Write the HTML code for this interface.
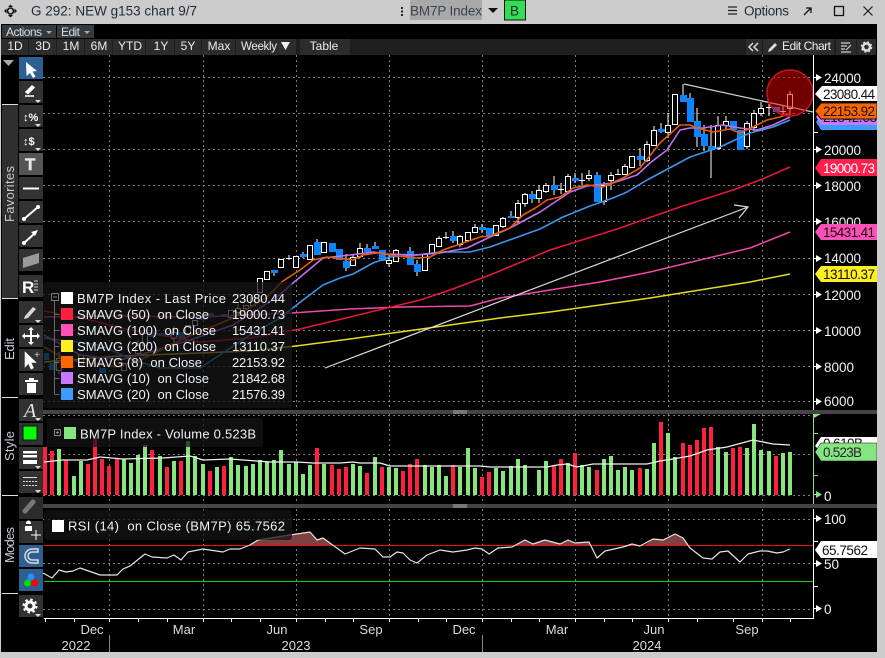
<!DOCTYPE html>
<html><head><meta charset="utf-8"><title>G 292: NEW g153 chart 9/7</title>
<style>
html,body{margin:0;padding:0;background:#ccc;width:885px;height:658px;overflow:hidden}
svg{display:block;position:absolute;left:0;top:0}
text{font-family:"Liberation Sans",sans-serif;font-size:13px;fill:#eef2f6}
.t{font-size:13.5px;fill:#1e2a38}
.b{font-size:12px;fill:#e8ecf0;text-anchor:middle}
.a{font-size:13.5px}
.k{fill:#111;font-size:13.5px}
.v{font-size:13px;fill:#d8dde2;text-anchor:middle}
.c{shape-rendering:crispEdges}
</style></head><body>
<svg width="885" height="658" viewBox="0 0 885 658" xmlns="http://www.w3.org/2000/svg">
<rect width="885" height="658" fill="#ccc"/>
<rect x="1" y="24" width="876" height="628" fill="#000"/>

<!-- title bar -->
<g fill="#111"><path d="M10.5 4.5l2.5 2.5h-5zM10.5 17.5l2.5-2.5h-5zM4 11l2.5-2.5v5zM17 11l-2.5-2.5v5z"/><circle cx="10.5" cy="11" r="3" fill="none" stroke="#111" stroke-width="1.6"/></g>
<text class="t" x="31" y="15.5" textLength="166">G 292: NEW g153 chart 9/7</text>
<g fill="#222"><rect x="401" y="7" width="2" height="2"/><rect x="401" y="10.5" width="2" height="2"/><rect x="401" y="14" width="2" height="2"/></g>
<rect x="410" y="0" width="72" height="20" fill="#a9a9a9"/>
<text class="t" x="410" y="15.5" textLength="72" style="fill:#3a4550">BM7P Index</text>
<path d="M488 8h10l-5 5z" fill="#111"/>
<rect x="504.5" y="0" width="21" height="20" fill="#33dd55" stroke="#111"/>
<text class="t" x="510" y="15.5">B</text>
<path d="M728 7h9M728 10.5h9M728 14h9" stroke="#222" stroke-width="1.2" fill="none"/>
<text class="t" x="744" y="15.5" textLength="45">Options</text>
<path d="M804 15l7-7M806 8h5v5" stroke="#111" stroke-width="1.3" fill="none"/>
<rect x="834.5" y="6.5" width="9" height="9" fill="none" stroke="#111" stroke-width="1.3"/>
<path d="M863.500 6.500l9 9M872.500 6.500l-9 9" stroke="#111" stroke-width="1.1"/>

<!-- toolbars -->
<g class="c">
<rect x="2" y="25" width="54" height="13" fill="#343a3e"/>
<rect x="57" y="25" width="37" height="13" fill="#343a3e"/>
<rect x="1" y="39" width="875" height="16" fill="#1f1e1b"/>
<g fill="#2c2c2c">
<rect x="1" y="39" width="27" height="16"/><rect x="29" y="39" width="27" height="16"/><rect x="57" y="39" width="27" height="16"/><rect x="85" y="39" width="27" height="16"/><rect x="113" y="39" width="32" height="16"/><rect x="146" y="39" width="28" height="16"/><rect x="175" y="39" width="26" height="16"/><rect x="202" y="39" width="33" height="16"/><rect x="236" y="39" width="60" height="16"/><rect x="300" y="39" width="50" height="16"/>
<rect x="746" y="39" width="16" height="16"/><rect x="763" y="39" width="71" height="16"/><rect x="836" y="39" width="20" height="16"/><rect x="857" y="39" width="19" height="16"/>
</g></g>
<text x="6" y="36" style="font-size:12px;fill:#d8dce0" textLength="36">Actions</text>
<path d="M46 31h6l-3 3z" fill="#aaa"/>
<text x="61" y="36" style="font-size:12px;fill:#d8dce0" textLength="19">Edit</text>
<path d="M84 31h6l-3 3z" fill="#aaa"/>
<text class="b" x="15" y="50">1D</text><text class="b" x="43" y="50">3D</text><text class="b" x="71" y="50">1M</text><text class="b" x="99" y="50">6M</text><text class="b" x="130" y="50">YTD</text><text class="b" x="161" y="50">1Y</text><text class="b" x="188" y="50">5Y</text><text class="b" x="219" y="50">Max</text>
<text x="241" y="50" style="font-size:11.5px;fill:#e8ecf0" textLength="36">Weekly</text>
<path d="M281 42h9l-4.500 8z" fill="#eee"/>
<text class="b" x="324" y="50">Table</text>
<path d="M753 43l-4 4 4 4M758 43l-4 4 4 4" stroke="#ddd" stroke-width="1.500" fill="none"/>
<path d="M768 52l1-3 6-6 2 2-6 6z" fill="#ddd"/>
<text x="782" y="50" style="font-size:12px;fill:#e8ecf0" textLength="49">Edit Chart</text>
<path d="M841 43h9M841 46h6M841 49h4M841 52h10M846 50l5-5" stroke="#ccc" stroke-width="1.200" fill="none"/>
<circle cx="866.500" cy="47" r="3.500" fill="none" stroke="#ddd" stroke-width="2.500"/>
<circle cx="866.500" cy="47" r="5" fill="none" stroke="#ddd" stroke-width="1.500" stroke-dasharray="2 2"/>

<!-- left gutter -->
<path d="M3 60h11l-5.500 6z" fill="#aaa"/>
<rect x="2" y="105" width="16" height="193" fill="#2f2f2f"/>
<path d="M2 104.500h16M2 298.500h16M2 397.500h16M2 495.500h16M2 593.500h16" stroke="#ddd" class="c"/>
<text transform="translate(14,222) rotate(-90)" textLength="56" style="font-size:13px;fill:#c6ccd2">Favorites</text>
<text transform="translate(14,360) rotate(-90)" textLength="22" style="font-size:13px;fill:#c6ccd2">Edit</text>
<text transform="translate(14,461) rotate(-90)" textLength="30" style="font-size:13px;fill:#c6ccd2">Style</text>
<text transform="translate(14,563) rotate(-90)" textLength="36" style="font-size:13px;fill:#c6ccd2">Modes</text>

<!-- tool buttons -->
<g class="c" fill="#323232">
<rect x="19" y="57" width="24" height="22" fill="#2d5f90"/>
<rect x="19" y="81" width="24" height="22"/><rect x="19" y="105" width="24" height="22"/><rect x="19" y="129" width="24" height="22"/>
<rect x="19" y="153" width="24" height="22" fill="#555"/>
<rect x="19" y="177" width="24" height="22"/><rect x="19" y="201" width="24" height="22"/><rect x="19" y="225" width="24" height="22"/><rect x="19" y="249" width="24" height="22"/><rect x="19" y="275" width="24" height="22"/>
<rect x="19" y="301" width="24" height="22"/><rect x="19" y="325" width="24" height="22"/><rect x="19" y="349" width="24" height="22"/><rect x="19" y="373" width="24" height="22"/>
<rect x="19" y="399" width="24" height="22"/><rect x="19" y="423" width="24" height="22"/><rect x="19" y="447" width="24" height="22"/><rect x="19" y="471" width="24" height="22"/>
<rect x="19" y="497" width="24" height="22" fill="#2c2c2c"/><rect x="19" y="521" width="24" height="22"/>
<rect x="19" y="545" width="24" height="22" fill="#2d5f90"/><rect x="19" y="569" width="24" height="22" fill="#2d5f90"/>
<rect x="19" y="595" width="24" height="22"/>
</g>
<path d="M26 62l11 9-4.500.5 3 5-2.500 1.500-3-5-3.500 3z" fill="#fff"/>
<path d="M26 92l6-6 2 1.500-6 6zM25 96h9" stroke="#fff" stroke-width="1.500" fill="#fff"/>
<path d="M35 100h6l-3 3zM35 124h6l-3 3zM35 148h6l-3 3zM35 320h6l-3 3zM35 418h6l-3 3zM35 466h6l-3 3zM35 490h6l-3 3zM35 614h6l-3 3z" fill="#ddd"/>
<text x="23" y="121" style="font-size:11px;font-weight:bold;fill:#fff">↕%</text>
<text x="23" y="145" style="font-size:11px;font-weight:bold;fill:#fff">↕$</text>
<text x="25" y="170" style="font-size:17px;font-weight:bold;fill:#dfe6f2;stroke:#dfe6f2;stroke-width:.5">T</text>
<path d="M23 188.500h16" stroke="#fff" stroke-width="2"/>
<path d="M24 219l14-12" stroke="#fff" stroke-width="2"/><circle cx="24" cy="219" r="2" fill="#fff"/><circle cx="38" cy="207" r="2" fill="#fff"/>
<path d="M24 243l10-9" stroke="#fff" stroke-width="2"/><path d="M38 230l-7 2 4 4z" fill="#fff"/><circle cx="24" cy="243" r="2" fill="#fff"/>
<path d="M23 258l16-5v10l-16 5z" fill="#9a9a9a"/>
<text x="22" y="293" style="font-size:17px;font-weight:bold;fill:#fff">R</text>
<path d="M34 281h4M34 284h4M34 287h4M34 290h4" stroke="#ccc"/>
<path d="M25 316l8-9 3 2-8 9-4 1z" fill="#d8d8d8"/>
<path d="M31 327l3 3h-2v5h5v-2l3 3-3 3v-2h-5v5h2l-3 3-3-3h2v-5h-5v2l-3-3 3-3v2h5v-5h-2z" fill="#fff"/>
<path d="M25 352v15l3.500-3.500 2.500 5.500 2.500-1-2.500-5.500h5zM37 352v5M34.500 354.500h5" fill="#fff" stroke="#fff" stroke-width=".6"/>
<path d="M25 380h13v2h-13zM27 383h9v10h-9zM29 378h5v2h-5z" fill="#fff"/>
<text x="24" y="417" style="font-family:'Liberation Serif',serif;font-size:20px;font-style:italic;fill:#e8e8e8">A</text>
<rect x="23" y="426" width="14" height="14" fill="#00ff00" stroke="#111"/>
<rect x="23" y="451" width="14" height="2.500" fill="#fff"/><rect x="23" y="455" width="14" height="2.500" fill="#fff"/><rect x="23" y="460" width="14" height="4" fill="#fff"/>
<path d="M23 477.500h14" stroke="#ddd"/><path d="M23 481.500h14M23 485.500h14" stroke="#ddd" stroke-dasharray="2 1"/>
<path d="M25 511l8-9" stroke="#777" stroke-width="5" stroke-linecap="round" stroke-dasharray="1.500 1.500" fill="none"/>
<path d="M26 524h5v-1a2.500 2.500 0 0 0-5 0zM25 526h7v5h-7z" fill="#fff"/>
<path d="M31 535h10M36 530v10" stroke="#fff"/>
<path d="M38 549h-6a7 7 0 0 0 0 14h6v-3h-6a4 4 0 0 1 0-8h6z" fill="none" stroke="#ddd" stroke-width="1.500"/>
<circle cx="31" cy="577" r="3.500" fill="#2a8cff"/><circle cx="27.500" cy="583" r="3.500" fill="#00dd00"/><circle cx="34.500" cy="583" r="3.500" fill="#ff0000"/>
<circle cx="30" cy="606" r="4" fill="none" stroke="#fff" stroke-width="3"/>
<circle cx="30" cy="606" r="6.500" fill="none" stroke="#fff" stroke-width="2" stroke-dasharray="2.500 2.600"/>

<!-- grid -->
<g class="c" stroke="#7c7c7c" fill="none" stroke-dasharray="2 3">
<path d="M109.500 55V409M203.500 55V409M296.500 55V409M389.500 55V409M482.500 55V409M575.500 55V409M668.500 55V409M762.500 55V409"/>
<path d="M109.500 414V503M203.500 414V503M296.500 414V503M389.500 414V503M482.500 414V503M575.500 414V503M668.500 414V503M762.500 414V503"/>
<path d="M109.500 509V618M203.500 509V618M296.500 509V618M389.500 509V618M482.500 509V618M575.500 509V618M668.500 509V618M762.500 509V618"/>
<path d="M43 77.500H813M43 113.500H813M43 149.500H813M43 185.500H813M43 221.500H813M43 258.500H813M43 294.500H813M43 330.500H813M43 366.500H813M43 401.500H813"/>
<path d="M43 415.500H813M43 454.500H813M43 495.500H813"/>
<path d="M43 519.500H813M43 563.500H813M43 609.500H813"/>
</g>

<!-- candles: wicks & hollow bodies -->
<g class="c" stroke="#fff" fill="#000" stroke-width="1.200">
<path fill="none" d="M353 254V266M360 243V258M389 255V267M396 249V262M425 253V271M439 236V247M460 235V247M475 224V233M503 217V228M518 200V223M525 193V207M539 185V203M546 183V193M568 174V192M589 170V181M604 182V205M611 172V190M625 164V175M647 141V162M654 126V146M668 113V138M718 116V150M726 116V130M747 121V149M754 110V131M761 102V116M790 91V115M289 255V260M446 232V239M561 183V194M582 173V185M618 169V174M769 102V116M783 105V115M274 270V276M303 252V258M317 239V255M346 254V271M367 244V255M375 242V249M410 247V265M417 260V276M453 231V243M482 224V233M511 211V218M532 191V203M554 176V195M575 173V183M597 172V202M640 148V166M661 123V133M683 84V102M690 93V122M697 108V147M704 125V151M711 125V178M59 352V374M138 340V356M174 326V342M238 304V314"/>
<path fill="none" d="M286 258.500h6M443 237.500h6M558 189.500h6M579 180.500h6M615 174.500h6M766 107.500h6M780 111.500h6"/>
<path d="M257.500 278.500h5v14h-5zM264.500 271.500h5v8h-5zM278.500 259.500h5v8h-5zM293.500 256.500h5v11h-5zM307.500 245.500h5v14h-5zM321.500 242.500h5v10h-5zM350.500 257.500h5v8h-5zM357.500 248.500h5v8h-5zM386.500 260.500h5v3h-5zM393.500 250.500h5v11h-5zM422.500 254.500h5v16h-5zM429.500 244.500h5v9h-5zM436.500 238.500h5v8h-5zM457.500 236.500h5v8h-5zM465.500 232.500h5v8h-5zM472.500 227.500h5v5h-5zM493.500 225.500h5v10h-5zM500.500 218.500h5v8h-5zM515.500 203.500h5v14h-5zM522.500 194.500h5v9h-5zM536.500 190.500h5v8h-5zM543.500 185.500h5v6h-5zM565.500 176.500h5v15h-5zM586.500 175.500h5v3h-5zM601.500 185.500h5v16h-5zM608.500 175.500h5v5h-5zM622.500 166.500h5v8h-5zM629.500 156.500h5v11h-5zM644.500 144.500h5v16h-5zM651.500 130.500h5v15h-5zM665.500 125.500h5v7h-5zM672.500 94.500h5v30h-5zM715.500 125.500h5v23h-5zM723.500 121.500h5v4h-5zM744.500 123.500h5v23h-5zM751.500 113.500h5v14h-5zM758.500 108.500h5v5h-5zM787.500 94.500h5v14h-5z"/>
<path d="M250.500 297.500h5v8h-5zM243.500 305.500h5v3h-5zM235.500 308.500h5v4h-5zM228.500 310.500h5v7h-5zM192.500 320.500h5v5h-5zM185.500 325.500h5v8h-5zM171.500 332.500h5v6h-5zM142.500 333.500h5v12h-5zM135.500 345.500h5v8h-5zM121.500 363.500h5v7h-5zM78.500 355.500h5v10h-5zM56.500 358.500h5v12h-5z"/>
</g>
<path class="c" fill="#0a84ff" d="M271 270h7v3h-7zM300 254h7v3h-7zM314 242h7v13h-7zM329 243h7v9h-7zM336 249h7v11h-7zM343 261h7v7h-7zM364 248h7v4h-7zM372 246h7v3h-7zM379 250h7v11h-7zM407 251h7v14h-7zM414 264h7v8h-7zM450 236h7v5h-7zM479 227h7v3h-7zM486 228h7v9h-7zM508 216h7v2h-7zM529 194h7v5h-7zM551 185h7v5h-7zM572 178h7v3h-7zM594 175h7v27h-7zM637 156h7v4h-7zM658 129h7v3h-7zM680 95h7v7h-7zM687 98h7v24h-7zM694 121h7v16h-7zM701 134h7v12h-7zM708 146h7v3h-7zM730 121h7v9h-7zM737 130h7v20h-7zM773 107h7v5h-7zM200 316h7v4h-7zM207 313h7v4h-7zM221 314h7v3h-7zM178 332h7v6h-7zM164 333h7v3h-7zM157 333h7v3h-7zM149 332h7v5h-7zM99 368h7v5h-7zM49 363h7v7h-7zM44 353h5v7h-5z"/>

<!-- moving averages -->
<g fill="none" stroke-linejoin="round">
<polyline stroke="#e4dc20" stroke-width="1.500" points="44,362 120,356 200,353 250,351 296,346 350,339 400,332 450,325 500,318 550,312 600,305 650,298 700,290 750,282 790,274"/>
<polyline stroke="#f048a8" stroke-width="1.500" points="44,317 120,316 200,317 292,313 350,309 400,307 470,306 500,298 550,290 600,282 650,272 700,260 750,248 790,232"/>
<polyline stroke="#e81838" stroke-width="1.500" points="44,311 90,320 130,330 200,342 250,338 300,329 350,317 420,300 450,290 490,275 550,250 617,229 680,207 733,190 760,180 790,167"/>
<polyline stroke="#3d94e8" stroke-width="1.600" points="44,338 100,345 133,360 160,368 200,368 250,335 280,318 303,300 323,285 340,278 353,274 373,263 390,257 417,255 440,252 470,252 490,247 540,229 563,217 590,206 613,198 627,192 647,180 662,172 690,157 720,147 750,133 773,127 790,120"/>
<polyline stroke="#c070f0" stroke-width="1.600" points="44,335 80,355 120,360 150,352 190,340 233,325 277,297 293,283 323,258 350,255 373,252 387,254 417,255 440,253 467,248 490,237 510,228 540,212 570,192 587,186 613,183 637,175 650,163 667,150 680,130 690,128 703,128 723,125 740,128 757,130 773,125 790,117"/>
<polyline stroke="#e85c08" stroke-width="1.600" points="44,347 67,360 117,367 140,360 187,337 233,318 267,297 283,281 300,270 313,260 327,257 353,260 363,255 377,253 397,256 417,258 430,257 443,250 463,243 480,237 490,236 510,228 523,215 537,207 547,200 560,197 573,188 587,185 603,187 623,178 640,168 660,143 680,125 690,125 697,128 713,132 730,129 740,133 753,127 767,120 780,117 790,113"/>
</g>

<!-- trend and arrow -->
<path d="M684 84L813 112" stroke="#cfcfcf" stroke-width="1.300" fill="none"/>
<path d="M325 368L748 207M734 205L748 207L739 218" stroke="#dcdcdc" stroke-width="1.200" fill="none"/>
<circle cx="790" cy="93" r="23" fill="#e00000" fill-opacity=".5" stroke="#cc1020" stroke-width="1.500"/>

<!-- legend main -->
<rect x="43" y="282" width="249" height="126" rx="3" fill="#141414" fill-opacity=".74"/>
<rect x="51.500" y="293.500" width="7" height="7" fill="none" stroke="#777"/><path d="M53 297h4" stroke="#777"/>
<path d="M54.500 301V394.500M54.500 314.500h5M54.500 330.500h5M54.500 346.500h5M54.500 362.500h5M54.500 378.500h5M54.500 394.500h5" stroke="#666" fill="none" class="c"/>
<g class="c">
<rect x="61" y="292" width="12" height="12" fill="#fff"/>
<rect x="61" y="308" width="12" height="12" fill="#ff2040"/>
<rect x="61" y="324" width="12" height="12" fill="#ff50b8"/>
<rect x="61" y="340" width="12" height="12" fill="#ffee22"/>
<rect x="61" y="356" width="12" height="12" fill="#ff6600"/>
<rect x="61" y="372" width="12" height="12" fill="#c878ff"/>
<rect x="61" y="388" width="12" height="12" fill="#3d9bff"/>
</g>
<text x="77" y="303" textLength="149">BM7P Index - Last Price</text><text x="232" y="303" textLength="53">23080.44</text>
<text x="77" y="319" textLength="132">SMAVG (50) &#160;on Close</text><text x="232" y="319" textLength="53">19000.73</text>
<text x="77" y="335" textLength="139">SMAVG (100) &#160;on Close</text><text x="232" y="335" textLength="53">15431.41</text>
<text x="77" y="351" textLength="139">SMAVG (200) &#160;on Close</text><text x="232" y="351" textLength="53">13110.37</text>
<text x="77" y="367" textLength="125">EMAVG (8) &#160;on Close</text><text x="232" y="367" textLength="53">22153.92</text>
<text x="77" y="383" textLength="132">SMAVG (10) &#160;on Close</text><text x="232" y="383" textLength="53">21842.68</text>
<text x="77" y="399" textLength="132">SMAVG (20) &#160;on Close</text><text x="232" y="399" textLength="53">21576.39</text>

<!-- volume bars -->
<g class="c" fill="none" stroke-width="4">
<path stroke="#ff2040" d="M45 495V447M52 495V451M66 495V460M88 495V464M95 495V437M102 495V459M109 495V466M117 495V459M152 495V450M167 495V467M181 495V461M210 495V471M224 495V466M317 495V448M332 495V465M339 495V469M346 495V467M367 495V473M382 495V467M403 495V471M410 495V464M417 495V459M453 495V465M482 495V477M489 495V472M554 495V465M561 495V459M575 495V453M597 495V470M640 495V468M661 495V422M683 495V443M690 495V445M697 495V440M704 495V428M711 495V427M733 495V448M740 495V447M776 495V456"/>
<path stroke="#86e57f" d="M59 495V449M74 495V476M81 495V461M124 495V459M131 495V463M138 495V455M145 495V445M160 495V456M174 495V461M188 495V441M195 495V456M203 495V464M217 495V467M231 495V457M238 495V465M246 495V466M253 495V464M260 495V460M267 495V462M274 495V460M281 495V450M289 495V464M296 495V462M303 495V474M310 495V465M324 495V464M353 495V464M360 495V466M375 495V457M389 495V467M396 495V468M425 495V465M432 495V467M439 495V465M446 495V476M460 495V467M468 495V448M475 495V468M496 495V468M503 495V471M511 495V466M518 495V459M525 495V465M539 495V470M546 495V461M568 495V463M582 495V465M589 495V467M604 495V459M611 495V456M618 495V470M625 495V467M632 495V470M647 495V469M654 495V443M668 495V433M675 495V457M718 495V447M726 495V452M747 495V448M754 495V424M761 495V450M769 495V451M783 495V453M790 495V452"/>
</g>
<polyline fill="none" stroke="#f0f0f0" stroke-width="1.300" points="44,462 63,460 87,460 100,457 123,459 163,458 190,456 203,460 230,459 270,462 297,462 313,463 340,463 353,462 360,463 380,463 390,466 430,466 480,466 490,467 547,467 557,465 567,464 577,467 593,464 647,464 660,461 673,459 690,456 707,450 727,447 753,440 773,444 790,445"/>
<rect x="47" y="418" width="216" height="29" rx="3" fill="#141414" fill-opacity=".74"/>
<rect x="54.500" y="429.500" width="6" height="6" fill="none" stroke="#888"/><path d="M56 432.500h3M57.500 431v3" stroke="#888"/>
<rect x="64" y="427" width="12" height="12" fill="#86e57f" class="c"/>
<text x="80" y="438.500" textLength="176">BM7P Index - Volume 0.523B</text>

<!-- RSI -->
<rect class="c" x="44" y="545" width="769" height="1" fill="#f01010"/>
<rect class="c" x="44" y="581" width="769" height="1" fill="#18d018"/>
<g fill="#7e4040"><polygon points="250,545 258,540 290,535 310,532 317,540 323,538 333,545"/><polygon points="515,545 525,540 533,544 545,540 560,544 568,540 575,543 589,542 590,545"/><polygon points="645,545 653,539 663,540 675,534 683,538 688,545"/></g>
<polyline fill="none" stroke="#e4e4e4" stroke-width="1.200" stroke-linejoin="round" points="43,573 52,578 59,570 66,572 73,571 80,568 100,575 117,575 123,569 130,566 145,554 152,557 167,558 174,555 181,560 188,552 203,549 223,552 230,549 240,549 250,545 258,540 290,535 310,532 317,540 323,538 345,554 360,548 375,549 383,557 390,557 397,552 403,553 410,560 417,563 427,555 440,550 453,552 467,550 475,548 482,549 489,554 498,548 512,547 525,540 533,544 545,540 560,544 568,540 575,543 589,542 597,558 605,551 623,547 632,544 640,546 653,539 663,540 675,534 683,538 690,548 703,558 712,559 720,552 728,551 740,562 748,554 760,551 767,551 777,553 783,552 790,549"/>
<rect x="44" y="510" width="248" height="30" rx="3" fill="#141414" fill-opacity=".74"/>
<rect x="52" y="520" width="12" height="12" fill="#fff" class="c"/>
<text x="68" y="530.500" textLength="217">RSI (14) &#160;on Close (BM7P) 65.7562</text>

<!-- separators -->
<g class="c"><rect x="43" y="410" width="834" height="4" fill="#444"/><rect x="43" y="504" width="834" height="4" fill="#444"/>
<path d="M453 411h14M453 413h14M453 505h14M453 507h14" stroke="#aaa"/></g>

<!-- axes -->
<g class="c" fill="none">
<path d="M813.500 55V410M813.500 509V619M44 618.500H814" stroke="#fff"/>
<path d="M813.500 414V504" stroke="#86e57f"/>
<path d="M45.500 619v3M74.500 619v3M109.500 619v3M138.500 619v3M167.500 619v3M203.500 619v3M231.500 619v3M260.500 619v3M296.500 619v3M325.500 619v3M353.500 619v3M389.500 619v3M418.500 619v3M446.500 619v3M482.500 619v3M511.500 619v3M539.500 619v3M575.500 619v3M604.500 619v3M632.500 619v3M668.500 619v3M697.500 619v3M733.500 619v3M762.500 619v3M790.500 619v3" stroke="#fff"/>
<path d="M814 132.500h4M814 541.500h4M814 586.500h4" stroke="#fff"/>
<path d="M814 433.500h4M814 475.500h4" stroke="#86e57f"/>
</g>
<path d="M109.500 635V652" stroke="#888" class="c"/><path d="M482.500 635V652" stroke="#888" class="c"/>
<g fill="#fff"><path d="M814 77h2v-3l6 3.500-6 3.500v-3h-2zM814 149h2v-3l6 3.500-6 3.500v-3h-2zM814 185h2v-3l6 3.500-6 3.500v-3h-2zM814 221h2v-3l6 3.500-6 3.500v-3h-2zM814 258h2v-3l6 3.500-6 3.500v-3h-2zM814 294h2v-3l6 3.500-6 3.500v-3h-2zM814 330h2v-3l6 3.500-6 3.500v-3h-2zM814 366h2v-3l6 3.500-6 3.500v-3h-2zM814 401h2v-3l6 3.500-6 3.500v-3h-2zM814 518h2v-3l6 3.500-6 3.500v-3h-2zM814 563h2v-3l6 3.500-6 3.500v-3h-2zM814 608h2v-3l6 3.500-6 3.500v-3h-2z"/></g>
<g fill="#86e57f"><path d="M814 414h7l-7 4zM814 494h2v-3l6 3.500-6 3.500v-3h-2z"/></g>

<!-- axis labels -->
<g class="a">
<text class="a" x="824" y="83" textLength="37">24000</text>
<text class="a" x="824" y="155" textLength="37">20000</text>
<text class="a" x="824" y="191" textLength="37">18000</text>
<text class="a" x="824" y="227" textLength="37">16000</text>
<text class="a" x="824" y="263" textLength="37">14000</text>
<text class="a" x="824" y="300" textLength="37">12000</text>
<text class="a" x="824" y="336" textLength="37">10000</text>
<text class="a" x="824" y="372" textLength="30">8000</text>
<text class="a" x="824" y="406" textLength="30">6000</text>
<text class="a" x="824" y="524" textLength="22">100</text>
<text class="a" x="824" y="569" textLength="15">50</text>
<text class="a" x="824" y="614" textLength="8">0</text>
<text class="a" x="824" y="501" textLength="8">0</text>
</g>
<!-- price flags -->
<polygon points="821,115 877,115 877,130 821,130 816,122" fill="#3d9bff"/>
<polygon points="821,110 877,110 877,125 821,125 816,117" fill="#c878ff"/>
<text class="k" x="823" y="122" textLength="54">21842.68</text>
<polygon points="822,86 877,86 877,101 822,101 815,94" fill="#fff"/>
<text class="k" x="823" y="99" textLength="52">23080.44</text>
<polygon points="821,103 877,103 877,119 821,119 815,111" fill="#ff6600" stroke="#111"/>
<text class="k" x="823" y="116" textLength="52">22153.92</text>
<polygon points="821,159 877,159 877,176 821,176 815,168" fill="#ff2050"/>
<text class="a" x="823" y="173" textLength="52" style="fill:#fff">19000.73</text>
<polygon points="821,224 877,224 877,240 821,240 815,232" fill="#ff50b8"/>
<text class="k" x="823" y="237" textLength="52">15431.41</text>
<polygon points="821,266 877,266 877,282 821,282 815,274" fill="#ffee22"/>
<text class="k" x="823" y="279" textLength="52">13110.37</text>
<polygon points="821,437 877,437 877,452 821,452 815,446" fill="#fff"/>
<text class="k" x="823" y="448" textLength="40">0.610B</text>
<polygon points="821,443 877,443 877,461 821,461 815,452" fill="#86e57f" stroke="#111" stroke-width=".6"/>
<text class="k" x="823" y="457" textLength="39" style="fill:#223">0.523B</text>
<polygon points="821,541 877,541 877,558 821,558 815,550" fill="#fff"/>
<text class="k" x="822" y="555" textLength="46">65.7562</text>

<!-- time axis -->
<text class="v" x="92" y="634">Dec</text><text class="v" x="184" y="634">Mar</text><text class="v" x="277" y="634">Jun</text><text class="v" x="371" y="634">Sep</text><text class="v" x="464" y="634">Dec</text><text class="v" x="557" y="634">Mar</text><text class="v" x="654" y="634">Jun</text><text class="v" x="747" y="634">Sep</text>
<text class="v" x="76" y="650">2022</text><text class="v" x="296" y="650">2023</text><text class="v" x="647" y="650">2024</text>

<rect x="877" y="24" width="8" height="634" fill="#ccc"/>
<rect x="0" y="652" width="885" height="6" fill="#ccc"/>
</svg>
</body></html>
